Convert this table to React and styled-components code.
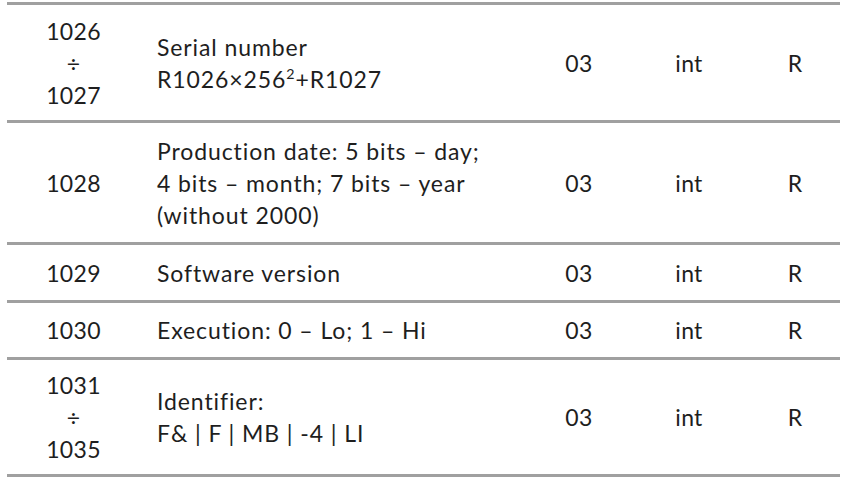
import React from "react";
import styled, { createGlobalStyle } from "styled-components";

const GlobalStyle = createGlobalStyle`
  html, body {
    margin: 0;
    padding: 0;
    background: #ffffff;
  }
`;

const Sup = styled.sup`
  font-size: 0.62em;
  line-height: 0;
  vertical-align: 0.62em;
  letter-spacing: 0;
  margin-right: 1px;
`;

const rows = [
  { h: 118, reg: ["1026", "÷", "1027"], desc: ["Serial number", <>R1026×256<Sup>2</Sup>+R1027</>] },
  { h: 122, reg: ["1028"], desc: ["Production date: 5 bits – day;", "4 bits – month; 7 bits – year", "(without 2000)"] },
  { h: 58, reg: ["1029"], desc: ["Software version"] },
  { h: 57, reg: ["1030"], desc: ["Execution: 0 – Lo; 1 – Hi"] },
  { h: 117, reg: ["1031", "÷", "1035"], desc: ["Identifier:", "F& | F | MB | -4 | LI"] },
];

const Page = styled.div`
  padding: 2px 18px 0 7px;
`;

const Table = styled.div`
  width: 833px;
  border-top: 3px solid #a0a0a0;
  font-family: Lato, "Open Sans", sans-serif;
  font-size: 23px;
  color: #1e1e1e;
`;

const Row = styled.div`
  display: grid;
  grid-template-columns: 133px 390px 98px 122px 90px;
  align-items: center;
  box-sizing: border-box;
  height: ${(p) => p.$h}px;
  border-bottom: 3px solid #a0a0a0;
`;

const Cell = styled.div`
  text-align: ${(p) => (p.$left ? "left" : "center")};
  padding-left: ${(p) => (p.$left ? "17px" : "0")};
  letter-spacing: ${(p) => (p.$left ? "0.9px" : "0.3px")};
  line-height: 32px;
`;

const Line = styled.div``;

export default function App() {
  return (
    <>
      <GlobalStyle />
      <Page>
        <Table>
          {rows.map((r, i) => (
            <Row key={i} $h={r.h}>
              <Cell>
                {r.reg.map((t, j) => (
                  <Line key={j}>{t}</Line>
                ))}
              </Cell>
              <Cell $left>
                {r.desc.map((t, j) => (
                  <Line key={j}>{t}</Line>
                ))}
              </Cell>
              <Cell>03</Cell>
              <Cell>int</Cell>
              <Cell>R</Cell>
            </Row>
          ))}
        </Table>
      </Page>
    </>
  );
}
